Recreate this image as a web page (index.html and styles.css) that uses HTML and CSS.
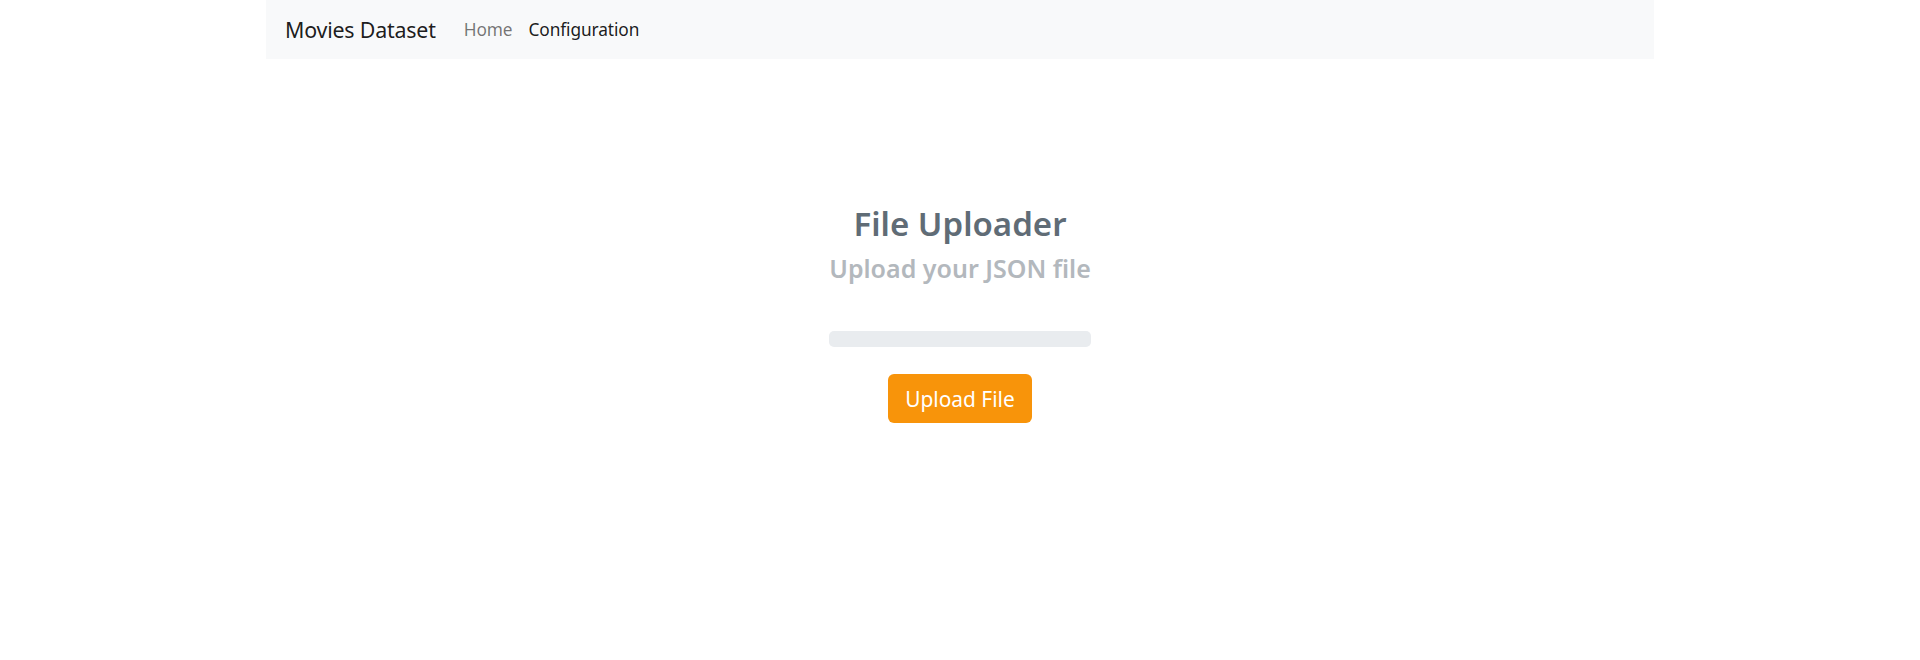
FILE: index.html
```html
<!DOCTYPE html>
<html lang="en">
<head>
<meta charset="utf-8">
<title>Movies Dataset</title>
<link rel="stylesheet" href="styles.css">
</head>
<body>
<nav class="navbar">
  <a class="brand" href="#">Movies Dataset</a>
  <ul class="nav">
    <li><a class="nav-link" href="#">Home</a></li>
    <li><a class="nav-link active" href="#">Configuration</a></li>
  </ul>
</nav>
<main class="uploader">
  <h2 class="title">File Uploader</h2>
  <h4 class="subtitle">Upload your JSON file</h4>
  <div class="progress"><div class="progress-bar" style="width:0%"></div></div>
  <button class="btn-upload" type="button">Upload File</button>
</main>
</body>
</html>
```
FILE: styles.css
```css
* { box-sizing: border-box; }
html, body { margin: 0; padding: 0; background: #fff; }
body {
  font-family: "Noto Sans", "Open Sans", sans-serif;
  color: #212529;
}
a { text-decoration: none; }

.navbar {
  width: 1388px;
  height: 59px;
  margin: 0 auto;
  background: #f8f9fa;
  display: flex;
  align-items: center;
  padding: 0 19px;
}
.brand {
  font-size: 21.4px;
  color: rgba(0,0,0,0.9);
  margin-right: 20px;
  letter-spacing: -0.2px;
}
.nav {
  list-style: none;
  margin: 0;
  padding: 0;
  display: flex;
}
.nav-link {
  display: block;
  padding: 8px 8px;
  font-size: 17.3px;
  color: rgba(0,0,0,0.55);
  letter-spacing: -0.1px;
}
.nav-link.active { color: rgba(0,0,0,0.9); }

.uploader {
  display: flex;
  flex-direction: column;
  align-items: center;
  padding-top: 145px;
}
.title {
  margin: 0;
  font-size: 33px;
  font-weight: 600;
  color: #606c76;
  line-height: 40px;
}
.subtitle {
  margin: 9px 0 0;
  font-size: 25px;
  font-weight: 600;
  color: #b3b8bd;
  line-height: 30px;
}
.progress {
  margin-top: 48px;
  width: 262px;
  height: 16px;
  background: #e9ecef;
  border-radius: 5px;
  overflow: hidden;
}
.progress-bar { height: 100%; background: #0d6efd; }
.btn-upload {
  margin-top: 27px;
  width: 144px;
  height: 49px;
  border: none;
  border-radius: 6px;
  background: #f8940a;
  color: #fff;
  font-family: inherit;
  font-size: 20.9px;
  cursor: pointer;
}
```
